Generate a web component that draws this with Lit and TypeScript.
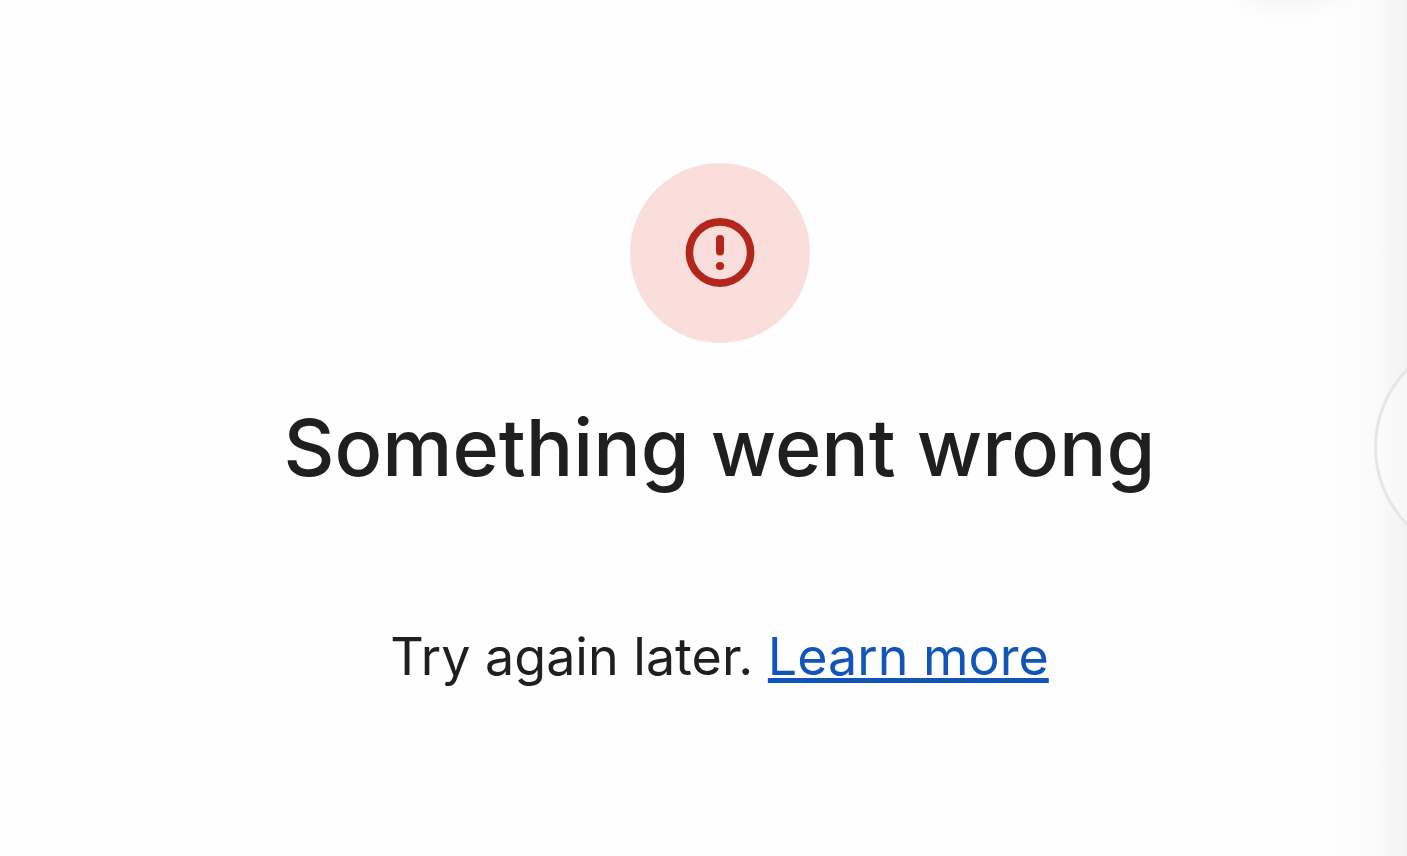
import { LitElement, html, css } from "lit";
import { customElement } from "lit/decorators.js";

@customElement("app-root")
export class AppRoot extends LitElement {
  static styles = css`
    :host {
      display: block;
      min-height: 100vh;
      position: relative;
      overflow: hidden;
      background: #fefefe;
      color: #1f1f1f;
      font-family: Inter, Roboto, sans-serif;
    }
    .edge {
      position: absolute;
      inset: 0 0 0 auto;
      width: 80px;
      background: linear-gradient(to right, #fefefe, #fbfbfb 55%, #f3f3f3);
    }
    .glow {
      position: absolute;
      top: -48px;
      right: 68px;
      width: 100px;
      height: 40px;
      border-radius: 50%;
      box-shadow: 0 4px 32px 4px rgba(0, 0, 0, 0.07);
    }
    .ring {
      position: absolute;
      top: 335px;
      right: -191px;
      width: 224px;
      height: 224px;
      box-sizing: border-box;
      border: 3px solid #e6e6e6;
      border-radius: 50%;
      background: linear-gradient(to right, #fcfcfc, #f6f6f6 32px);
    }
    .message {
      position: relative;
      display: flex;
      flex-direction: column;
      align-items: center;
      padding: 163px 0 0 32px;
      text-align: center;
    }
    .badge {
      display: grid;
      place-items: center;
      width: 180px;
      height: 180px;
      border-radius: 50%;
      background: #f9dedc;
    }
    .badge svg {
      display: block;
      width: 84px;
      height: 84px;
    }
    h1 {
      margin: 56px 0 0;
      font-size: 79px;
      line-height: 96px;
      font-weight: 500;
    }
    p {
      margin: 126px 0 0;
      font-size: 52px;
      line-height: 72px;
    }
    a {
      color: #1155b8;
      text-decoration: underline;
      text-decoration-thickness: 5px;
      text-underline-offset: 3px;
      text-decoration-skip-ink: none;
    }
  `;

  render() {
    return html`
      <div class="edge"></div>
      <div class="glow"></div>
      <div class="ring"></div>
      <main class="message">
        <div class="badge">
          <svg viewBox="0 0 84 84" aria-hidden="true">
            <circle cx="42" cy="41.5" r="30.6" fill="none" stroke="#b3261e" stroke-width="7.6" />
            <path d="M42 28v12.6" fill="none" stroke="#b3261e" stroke-width="8" stroke-linecap="round" />
            <circle cx="42" cy="55" r="4.1" fill="#b3261e" />
          </svg>
        </div>
        <h1>Something went wrong</h1>
        <p>Try again later. <a href="#">Learn more</a></p>
      </main>
    `;
  }
}
